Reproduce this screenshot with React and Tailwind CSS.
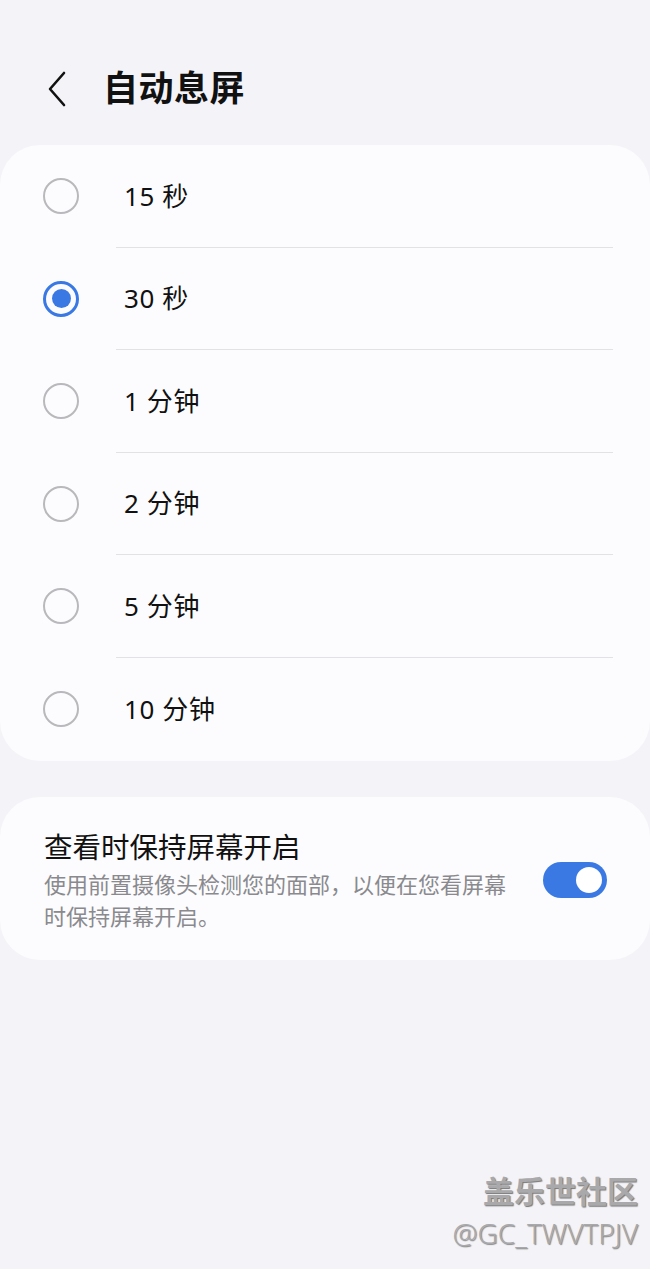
import { useState } from 'react';

const options = ['15 秒', '30 秒', '1 分钟', '2 分钟', '5 分钟', '10 分钟'];

const font = { fontFamily: '"Noto Sans", "Noto Sans CJK SC", sans-serif' };

function Radio({ checked }) {
    return checked ? (
        <span className="flex h-[36px] w-[36px] items-center justify-center rounded-full border-[3px] border-[#3a79e3]">
            <span className="h-[19px] w-[19px] rounded-full bg-[#3a79e3]" />
        </span>
    ) : (
        <span className="h-[36px] w-[36px] rounded-full border-[2.5px] border-[#b9b9bd]" />
    );
}

export default function App() {
    const [selected, setSelected] = useState(1);
    const [keepOn, setKeepOn] = useState(true);

    return (
        <div className="min-h-[1269px] bg-[#f4f4f8] text-[#111]" style={font}>
            {/* ── Header ── */}
            <div className="flex h-[145px] items-start pt-[65px] pl-[42px]">
                <svg width="30" height="40" viewBox="0 0 30 40" className="mt-[4px]">
                    <path d="M22 4 L8 20 L22 36" fill="none" stroke="#111" strokeWidth="2.6" strokeLinecap="round" strokeLinejoin="round" />
                </svg>
                <h1 className="ml-[31px] text-[35px] leading-[46px] font-bold tracking-[0.5px]">自动息屏</h1>
            </div>

            {/* ── Timeout options ── */}
            <div className="rounded-[40px] bg-[#fcfcfe]">
                {options.map((label, i) => (
                    <button
                        key={label}
                        onClick={() => setSelected(i)}
                        className={`flex w-full items-center text-left ${i === options.length - 1 ? 'h-[103.5px]' : 'h-[102.5px]'}`}
                    >
                        <span className="flex w-[116px] shrink-0 pl-[43px]">
                            <Radio checked={selected === i} />
                        </span>
                        <span className={`flex h-full flex-1 items-center mr-[37px] ${i < options.length - 1 ? 'border-b-[1.5px] border-[#e2e2e6]' : ''}`}>
                            <span className="ml-[8px] text-[26px] leading-none tracking-[0.6px]">{label}</span>
                        </span>
                    </button>
                ))}
            </div>

            {/* ── Keep screen on ── */}
            <div className="mt-[36px] flex items-center rounded-[40px] bg-[#fcfcfe] pt-[30px] pb-[28px] pl-[44px] pr-[43px]">
                <div className="flex-1">
                    <div className="text-[28.5px] leading-[40px]">查看时保持屏幕开启</div>
                    <div className="mt-[1px] w-[470px] text-[22px] leading-[32px] text-[#8a8a8e]">
                        使用前置摄像头检测您的面部，以便在您看屏幕时保持屏幕开启。
                    </div>
                </div>
                <button
                    onClick={() => setKeepOn(!keepOn)}
                    className={`flex h-[36px] w-[64px] shrink-0 items-center rounded-full px-[5px] ${keepOn ? 'justify-end bg-[#3a79e3]' : 'justify-start bg-[#b9b9bd]'}`}
                >
                    <span className="h-[26px] w-[26px] rounded-full bg-white" />
                </button>
            </div>

            {/* ── Watermark ── */}
            <div className="mt-[212px] flex flex-col items-end pr-[12px] text-[#a9a9ac]">
                <div className="text-[31px] leading-[38px] font-semibold" style={{ textShadow: '1px 1px 1px #777' }}>盖乐世社区</div>
                <div className="mt-[3px] text-[28px] leading-[40px] font-light" style={{ textShadow: '1px 1px 1px #888' }}>@GC_TWVTPJV</div>
            </div>
        </div>
    );
}
